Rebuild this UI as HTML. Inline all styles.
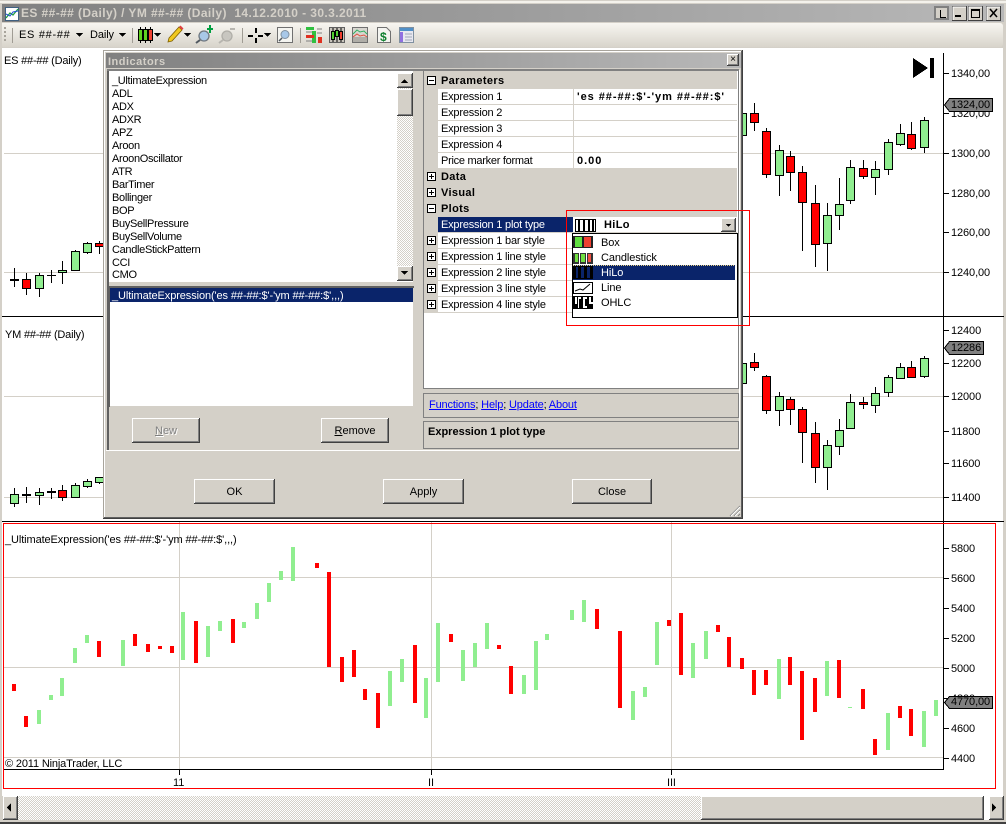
<!DOCTYPE html>
<html><head><meta charset="utf-8"><title>Indicators</title>
<style>
html,body{margin:0;padding:0}
body{width:1006px;height:824px;position:relative;overflow:hidden;background:#d4d0c8}
.a{position:absolute}
svg.a{left:0;top:0}
.t{position:absolute;white-space:pre;font:11px/13px "Liberation Sans",sans-serif;color:#000;margin-top:1px;letter-spacing:-.1px}
.l{letter-spacing:-.32px}
.e{letter-spacing:-.2px}
.b{font-weight:bold;letter-spacing:.35px}
.btn{position:absolute;background:#d4d0c8;box-shadow:inset -1px -1px #404040,inset 1px 1px #fff,inset -2px -2px #808080;font:11px/27px "Liberation Sans",sans-serif;text-align:center;color:#000}
.d{background:repeating-conic-gradient(#d4d0c8 0 25%,#fff 0 50%) 0 0/2px 2px}
.row{position:absolute;left:438px;width:299px;height:15px;background:#fff;border-bottom:1px solid #d4d0c8}
.w{color:#fff}
</style></head><body>
<div class="a" style="left:0;top:1px;width:1006px;height:2px;background:#f4f2ec"></div>
<div class="a" style="left:2px;top:4px;width:1002px;height:18px;background:linear-gradient(90deg,#808080,#b8b8b8)"></div>
<div class="t b" style="left:21px;top:5px;font-size:12px;line-height:14px;color:#d4d0c8;letter-spacing:.4px">ES ##-## (Daily) / YM ##-## (Daily)  14.12.2010 - 30.3.2011</div>
<div class="a" style="left:2px;top:23px;width:1001px;height:24px;background:linear-gradient(#f8f6f1,#d8d4cb);border-radius:0 3px 3px 0"></div>
<div class="t" style="left:19px;top:28px;font-size:11px;letter-spacing:.7px">ES ##-##</div>
<div class="t" style="left:90px;top:28px;font-size:11px">Daily</div>
<div class="a" style="left:2px;top:48px;width:1001px;height:748px;background:#fff"></div>
<div class="a d" style="left:18px;top:796px;width:683px;height:24px"></div>
<div class="a" style="left:984px;top:796px;width:5px;height:24px;background:#fff"></div>
<div class="a" style="left:0;top:822px;width:1006px;height:2px;background:#404040"></div>
<div class="btn" style="left:3px;top:796px;width:15px;height:24px"></div>
<div class="btn" style="left:701px;top:796px;width:283px;height:24px"></div>
<div class="btn" style="left:989px;top:796px;width:15px;height:24px"></div>

<svg class="a" width="1006" height="824" viewBox="0 0 1006 824" shape-rendering="crispEdges">
<path fill="none" stroke="#d4d0c8" d="M4 153.500H943M4 272.500H943M4 396.500H943M4 497.500H943M4 577.500H943M4 667.500H943M4 757.500H943M179.500 522V769M431.500 522V769M671.500 522V769"/>
<path fill="none" stroke="#000" d="M943.500 53V769M2 316.500H1004M2 521.500H1004M3 769.500H944M179.500 769V775M431.500 769V775M671.500 769V775M943 73.500h6M943 113.500h6M943 153.500h6M943 193.500h6M943 232.500h6M943 272.500h6M943 330.500h6M943 363.500h6M943 396.500h6M943 431.500h6M943 463.500h6M943 497.500h6M943 548.500h6M943 578.500h6M943 608.500h6M943 638.500h6M943 668.500h6M943 698.500h6M943 728.500h6M943 758.500h6"/>
<path fill="none" stroke="#f00" d="M3.500 523.500H995.500V788.500H3.500Z"/>
<path fill="#000" d="M913 58L928 68L913 78ZM930 58h4v20h-4z"/>
<path fill="none" stroke="#000" d="M754.500 103V131M766.500 128V178M779.500 145V196M790.500 151V191M802.500 166V251M815.500 185V267M827.500 203V271M839.500 178V230M850.500 160V204M863.500 160V179M875.500 161V195M888.500 139V175M900.500 124V146M911.500 122V150M924.500 117V153M754.500 353V371M766.500 375V414M779.500 392V426M790.500 397V425M802.500 407V463M815.500 422V483M827.500 440V490M839.500 419V455M850.500 394V429M863.500 397V409M875.500 387V413M888.500 375V397M900.500 363V378M911.500 361V377M924.500 356V378M14.500 268V287M26.500 273V295M39.500 273V297M51.500 270V283M62.500 261V284M75.500 250V271M87.500 242V254M99.500 241V254M14.500 488V507M26.500 487V503M39.500 488V505M51.500 488V499M62.500 485V501M75.500 483V497M87.500 479V488M99.500 477V484M47 275.500h9M10 279.500h9M10 280.500h9M22 494.500h9M22 495.500h9M47 491.500h9M47 492.500h9"/>
<path fill="#90ee90" stroke="#000" d="M738.500 113.500h8v22h-8zM775.500 150.500h8v25h-8zM823.500 215.500h8v28h-8zM835.500 204.500h8v11h-8zM846.500 167.500h8v33h-8zM871.500 169.500h8v8h-8zM884.500 142.500h8v27h-8zM896.500 133.500h8v11h-8zM920.500 120.500h8v27h-8zM738.500 363.500h8v20h-8zM775.500 396.500h8v14h-8zM823.500 445.500h8v22h-8zM835.500 430.500h8v16h-8zM846.500 402.500h8v26h-8zM871.500 393.500h8v12h-8zM884.500 377.500h8v15h-8zM896.500 367.500h8v11h-8zM920.500 358.500h8v18h-8zM35.500 275.500h8v13h-8zM58.500 270.500h8v2h-8zM71.500 251.500h8v19h-8zM83.500 243.500h8v9h-8zM10.500 494.500h8v9h-8zM35.500 492.500h8v3h-8zM71.500 485.500h8v12h-8zM83.500 481.500h8v5h-8zM95.500 477.500h8v5h-8z"/>
<path fill="#f00" stroke="#000" d="M750.500 113.500h8v9h-8zM762.500 131.500h8v43h-8zM786.500 156.500h8v16h-8zM798.500 172.500h8v30h-8zM811.500 203.500h8v41h-8zM859.500 168.500h8v8h-8zM907.500 134.500h8v14h-8zM750.500 362.500h8v5h-8zM762.500 376.500h8v34h-8zM786.500 399.500h8v10h-8zM798.500 409.500h8v23h-8zM811.500 433.500h8v34h-8zM859.500 402.500h8v2h-8zM907.500 367.500h8v10h-8zM22.500 279.500h8v9h-8zM95.500 243.500h8v3h-8zM58.500 490.500h8v7h-8z"/>
<path fill="#90ee90" d="M37 710h4v14h-4zM49 695h4v5h-4zM60 678h4v18h-4zM73 648h4v15h-4zM85 635h4v8h-4zM121 640h4v26h-4zM181 612h4v48h-4zM206 626h4v31h-4zM218 621h4v10h-4zM242 622h4v6h-4zM255 603h4v16h-4zM267 583h4v19h-4zM279 571h4v9h-4zM291 547h4v34h-4zM388 671h4v35h-4zM400 659h4v23h-4zM424 678h4v40h-4zM436 623h4v59h-4zM461 650h4v31h-4zM473 643h4v24h-4zM485 623h4v26h-4zM522 675h4v19h-4zM534 641h4v49h-4zM545 634h4v6h-4zM570 610h4v10h-4zM582 600h4v22h-4zM631 691h4v29h-4zM643 687h4v10h-4zM655 622h4v43h-4zM691 643h4v35h-4zM704 631h4v28h-4zM777 659h4v40h-4zM825 661h4v35h-4zM848 707h4v1h-4zM886 713h4v37h-4zM922 711h4v36h-4zM934 700h4v16h-4z"/>
<path fill="#f00" d="M12 684h4v7h-4zM24 716h4v11h-4zM97 641h4v16h-4zM133 634h4v12h-4zM146 644h4v8h-4zM158 646h4v3h-4zM170 646h4v7h-4zM194 621h4v42h-4zM231 619h4v24h-4zM315 563h4v5h-4zM327 572h4v95h-4zM340 657h4v25h-4zM352 650h4v27h-4zM363 689h4v11h-4zM376 693h4v35h-4zM413 645h4v58h-4zM449 634h4v8h-4zM497 645h4v4h-4zM509 666h4v28h-4zM595 609h4v20h-4zM618 631h4v77h-4zM667 620h4v6h-4zM679 613h4v62h-4zM716 625h4v7h-4zM727 637h4v30h-4zM740 658h4v11h-4zM752 670h4v25h-4zM764 670h4v15h-4zM788 657h4v28h-4zM800 671h4v69h-4zM813 678h4v34h-4zM837 660h4v38h-4zM861 689h4v20h-4zM873 739h4v16h-4zM898 706h4v12h-4zM909 709h4v27h-4z"/>
</svg>

<div class="t" style="left:4px;top:54px;letter-spacing:-.2px">ES ##-## (Daily)</div>
<div class="t" style="left:5px;top:328px;letter-spacing:-.2px">YM ##-## (Daily)</div>
<div class="t" style="left:5px;top:533px">_UltimateExpression('es ##-##:$'-'ym ##-##:$',,,)</div>
<div class="t" style="left:5px;top:757px;letter-spacing:-.15px">© 2011 NinjaTrader, LLC</div>
<div class="t" style="left:173px;top:776px">11</div>
<div class="t" style="left:428px;top:776px">II</div>
<div class="t" style="left:667px;top:776px">III</div>
<div class="t" style="left:951px;top:67px">1340,00</div>
<div class="t" style="left:951px;top:107px">1320,00</div>
<div class="t" style="left:951px;top:147px">1300,00</div>
<div class="t" style="left:951px;top:187px">1280,00</div>
<div class="t" style="left:951px;top:226px">1260,00</div>
<div class="t" style="left:951px;top:266px">1240,00</div>
<div class="t" style="left:951px;top:324px">12400</div>
<div class="t" style="left:951px;top:357px">12200</div>
<div class="t" style="left:951px;top:390px">12000</div>
<div class="t" style="left:951px;top:425px">11800</div>
<div class="t" style="left:951px;top:457px">11600</div>
<div class="t" style="left:951px;top:491px">11400</div>
<div class="t" style="left:951px;top:542px">5800</div>
<div class="t" style="left:951px;top:572px">5600</div>
<div class="t" style="left:951px;top:602px">5400</div>
<div class="t" style="left:951px;top:632px">5200</div>
<div class="t" style="left:951px;top:662px">5000</div>
<div class="t" style="left:951px;top:692px">4800</div>
<div class="t" style="left:951px;top:722px">4600</div>
<div class="t" style="left:951px;top:752px">4400</div>
<svg class="a" width="1006" height="824" viewBox="0 0 1006 824" shape-rendering="crispEdges">
<path fill="#808080" stroke="#000" d="M944.500 105L949.500 98.500H992.500V111.500H949.500ZM944.500 348L949.500 341.500H983.500V354.500H949.500ZM944.500 702.500L949.500 696.500H992.500V708.500H949.500Z"/>
</svg>
<div class="t" style="left:951px;top:98px">1324,00</div>
<div class="t" style="left:951px;top:341px">12286</div>
<div class="t" style="left:951px;top:695px">4770,00</div>

<!-- Dialog -->
<div class="a" style="left:103px;top:50px;width:640px;height:469px;background:#d4d0c8;box-shadow:inset -1px -1px #404040,inset 1px 1px #a8a49c,inset -2px -2px #606060,inset 2px 2px #fff"></div>
<div class="a" style="left:106px;top:53px;width:635px;height:15px;background:linear-gradient(90deg,#808080,#b8b8b8)"></div>
<div class="t b" style="left:108px;top:55px;color:#d4d0c8;letter-spacing:.5px">Indicators</div>
<div class="btn" style="left:727px;top:54px;width:12px;height:12px;font-size:10px;line-height:12px">×</div>
<div class="a" style="left:106px;top:450px;width:634px;height:1px;background:#fff"></div>
<div class="a" style="left:107px;top:70px;width:2px;height:380px;background:#606060"></div>
<div class="a" style="left:107px;top:69px;width:632px;height:2px;background:#808080"></div>
<div class="a" style="left:739px;top:70px;width:1px;height:381px;background:#fff"></div>

<div class="a" style="left:109px;top:71px;width:304px;height:211px;background:#fff;border-bottom:1px solid #d4d0c8"></div>
<div class="a d" style="left:397px;top:88px;width:16px;height:178px"></div>
<div class="btn" style="left:397px;top:73px;width:16px;height:15px"></div>
<div class="btn" style="left:397px;top:89px;width:16px;height:27px"></div>
<div class="btn" style="left:397px;top:266px;width:16px;height:15px"></div>
<div class="t l" style="left:112px;top:74px">_UltimateExpression</div>
<div class="t l" style="left:112px;top:87px">ADL</div>
<div class="t l" style="left:112px;top:100px">ADX</div>
<div class="t l" style="left:112px;top:113px">ADXR</div>
<div class="t l" style="left:112px;top:126px">APZ</div>
<div class="t l" style="left:112px;top:139px">Aroon</div>
<div class="t l" style="left:112px;top:152px">AroonOscillator</div>
<div class="t l" style="left:112px;top:165px">ATR</div>
<div class="t l" style="left:112px;top:178px">BarTimer</div>
<div class="t l" style="left:112px;top:191px">Bollinger</div>
<div class="t l" style="left:112px;top:204px">BOP</div>
<div class="t l" style="left:112px;top:217px">BuySellPressure</div>
<div class="t l" style="left:112px;top:230px">BuySellVolume</div>
<div class="t l" style="left:112px;top:243px">CandleStickPattern</div>
<div class="t l" style="left:112px;top:256px">CCI</div>
<div class="t l" style="left:112px;top:268px">CMO</div>

<div class="a" style="left:108px;top:286px;width:306px;height:121px;background:#fff;box-shadow:inset 2px 2px #606060,inset -1px -1px #d4d0c8"></div>
<div class="a" style="left:110px;top:288px;width:303px;height:14px;background:#0a246a"></div>
<div class="t w" style="left:112px;top:289px">_UltimateExpression('es ##-##:$'-'ym ##-##:$',,,)</div>
<div class="btn" style="left:132px;top:418px;width:68px;height:25px;color:#808080;text-shadow:1px 1px #fff"><u>N</u>ew</div>
<div class="btn" style="left:321px;top:418px;width:68px;height:25px"><u>R</u>emove</div>
<div class="btn" style="left:194px;top:479px;width:81px;height:25px">OK</div>
<div class="btn" style="left:383px;top:479px;width:81px;height:25px">Apply</div>
<div class="btn" style="left:572px;top:479px;width:80px;height:25px">Close</div>

<!-- Property grid -->
<div class="a" style="left:423px;top:71px;width:314px;height:317px;background:#fff;border:1px solid #808080;border-top:0"></div>
<div class="a" style="left:424px;top:71px;width:14px;height:242px;background:#d4d0c8"></div>
<div class="a" style="left:424px;top:71px;width:313px;height:18px;background:#d4d0c8"></div>
<div class="a" style="left:424px;top:169px;width:313px;height:48px;background:#d4d0c8"></div>
<div class="row" style="top:89px"></div><div class="row" style="top:105px"></div><div class="row" style="top:121px"></div><div class="row" style="top:137px"></div><div class="row" style="top:153px"></div>
<div class="row" style="top:217px"></div><div class="row" style="top:233px"></div><div class="row" style="top:249px"></div><div class="row" style="top:265px"></div><div class="row" style="top:281px"></div><div class="row" style="top:297px"></div>
<div class="a" style="left:573px;top:89px;width:1px;height:80px;background:#d4d0c8"></div>
<div class="a" style="left:573px;top:233px;width:1px;height:80px;background:#d4d0c8"></div>
<div class="a" style="left:438px;top:217px;width:135px;height:15px;background:#0a246a"></div>
<div class="t b" style="left:441px;top:74px">Parameters</div>
<div class="t e" style="left:441px;top:90px">Expression 1</div>
<div class="t e" style="left:441px;top:106px">Expression 2</div>
<div class="t e" style="left:441px;top:122px">Expression 3</div>
<div class="t e" style="left:441px;top:138px">Expression 4</div>
<div class="t" style="left:441px;top:154px;letter-spacing:-.27px">Price marker format</div>
<div class="t b" style="left:577px;top:90px;letter-spacing:.95px">'es ##-##:$'-'ym ##-##:$'</div>
<div class="t b" style="left:577px;top:154px;letter-spacing:1px">0.00</div>
<div class="t b" style="left:441px;top:170px">Data</div>
<div class="t b" style="left:441px;top:186px">Visual</div>
<div class="t b" style="left:441px;top:202px">Plots</div>
<div class="t w e" style="left:441px;top:218px">Expression 1 plot type</div>
<div class="t e" style="left:441px;top:234px">Expression 1 bar style</div>
<div class="t e" style="left:441px;top:250px">Expression 1 line style</div>
<div class="t e" style="left:441px;top:266px">Expression 2 line style</div>
<div class="t e" style="left:441px;top:282px">Expression 3 line style</div>
<div class="t e" style="left:441px;top:298px">Expression 4 line style</div>
<div class="t b" style="left:604px;top:218px">HiLo</div>
<div class="btn" style="left:721px;top:218px;width:15px;height:14px"></div>
<div class="a" style="left:572px;top:233px;width:164px;height:83px;background:#fff;border:1px solid #000"></div>
<div class="a" style="left:573px;top:265px;width:162px;height:15px;background:#0a246a"></div>
<div class="t" style="left:601px;top:236px">Box</div>
<div class="t" style="left:601px;top:251px;letter-spacing:-.1px">Candlestick</div>
<div class="t w" style="left:601px;top:266px">HiLo</div>
<div class="t" style="left:601px;top:281px">Line</div>
<div class="t" style="left:601px;top:296px">OHLC</div>

<div class="a" style="left:423px;top:393px;width:314px;height:23px;border:1px solid #808080"></div>
<div class="a" style="left:423px;top:421px;width:314px;height:26px;border:1px solid #808080"></div>
<div class="t" style="left:429px;top:398px;color:#00f;letter-spacing:-.15px"><u>Functions</u><span style="color:#000">;</span> <u>Help</u><span style="color:#000">;</span> <u>Update</u><span style="color:#000">;</span> <u>About</u></div>
<div class="t b" style="left:428px;top:425px;letter-spacing:0">Expression 1 plot type</div>

<!-- Overlay icons -->
<svg class="a" width="1006" height="824" viewBox="0 0 1006 824">
<g shape-rendering="crispEdges">
<path fill="none" stroke="#f00" d="M566.500 210.500H749.500V325.500H566.500Z"/>
<!-- expanders -->
<g fill="#fff" stroke="#000">
<path d="M427.500 76.500h8v8h-8zM427.500 172.500h8v8h-8zM427.500 188.500h8v8h-8zM427.500 204.500h8v8h-8zM427.500 236.500h8v8h-8zM427.500 252.500h8v8h-8zM427.500 268.500h8v8h-8zM427.500 284.500h8v8h-8zM427.500 300.500h8v8h-8z"/>
<path fill="none" d="M429 80.500h5M429 176.500h5M431.500 174v5M429 192.500h5M431.500 190v5M429 208.500h5M429 240.500h5M431.500 238v5M429 256.500h5M431.500 254v5M429 272.500h5M431.500 270v5M429 288.500h5M431.500 286v5M429 304.500h5M431.500 302v5"/>
</g>
<!-- scrollbar arrows -->
<path fill="#000" d="M401 83h7l-3.500-4zM401 271h7l-3.500 4zM726 224h5l-2.500 3zM11 803v9l-4-4.500zM992 803v9l4-4.500z"/>
<!-- plot type swatch -->
<path fill="#fff" stroke="#000" d="M575.500 219.500h20v12h-20z"/>
<path fill="#000" d="M578 220h2v11h-2zM583 220h2v11h-2zM588 220h2v11h-2zM592 220h2v11h-2z"/>
<!-- Box -->
<path fill="#222" d="M573 236h20v12h-20z"/>
<path fill="#60e040" d="M575 237h7v10h-7z"/><path fill="#f04030" d="M584 237h7v10h-7z"/>
<!-- Candlestick -->
<path fill="#333" d="M573 251h20v13h-20z"/>
<path fill="#fff" d="M573 251h20v2h-20zM579 253h1v11h-1zM586 253h1v11h-1z"/>
<path fill="#70e040" d="M575 254h3v8h-3zM581 254h4v8h-4z"/><path fill="#f05040" d="M588 254h3v8h-3z"/>
<!-- HiLo -->
<path fill="#000" d="M573 266h20v13h-20z"/>
<path fill="#0a246a" d="M576 267h2v11h-2zM581 267h3v11h-3zM587 267h3v11h-3z"/>
<path fill="none" stroke="#e8d080" stroke-dasharray="1 1" d="M573 265.500h162"/>
<!-- Line -->
<path fill="#fff" stroke="#000" d="M573.500 282.500h19v11h-19z"/>
<!-- OHLC -->
<path fill="#000" d="M573 296h20v13h-20z"/>
<path fill="#fff" d="M575 297h2v7h-2zM578 297h3v2h-2v9h-1zM583 297h4v2h-2v7h2v2h-4zM589 297h2v5h2v2h-4z"/>
<!-- Toolbar separators -->
<path fill="#a8a49c" d="M4 27h2v2h-2zM4 31h2v2h-2zM4 35h2v2h-2zM4 39h2v2h-2z"/>
<path fill="none" stroke="#a09c94" d="M12.500 28V43M132.500 28V43M242.500 28V43M300.500 28V43"/>
<path fill="#000" d="M76 33h7l-3.500 4zM119 33h7l-3.500 4zM154 33h7l-3.500 4zM184 33h7l-3.500 4zM264 33h7l-3.500 4z"/>
<!-- crosshair -->
<path fill="#000" d="M255 28h2v5h-2zM255 38h2v5h-2zM248 35h5v2h-5zM258 35h5v2h-5z"/>
<!-- candles -->
<path fill="none" stroke="#000" d="M140.500 27V43M145.500 27V43M150.500 27V43"/>
<path fill="#60d020" stroke="#000" d="M138.500 29.500h4v11h-4zM143.500 29.500h4v11h-4z"/>
<path fill="#f04030" stroke="#000" d="M148.500 29.500h4v11h-4z"/>
<!-- window buttons -->
<path fill="#808080" d="M934 6h15v14h-15z"/><path fill="#d4d0c8" d="M936 8h11v10h-11z"/>
<path fill="#000" d="M940 10h1v7h5v1h-6z"/>
</g>
<!-- title icon -->
<g>
<path fill="#fff" stroke="#406080" d="M5.500 7.500h13v13h-13z"/>
<path fill="none" stroke="#20a040" stroke-width="1.300" d="M6 18l4-5 3 2 5-6"/>
<path fill="none" stroke="#2050d0" stroke-width="1" d="M6 14l4 2 3-4 5-1"/>
<!-- Line swatch -->
<path fill="none" stroke="#000" d="M575 291l5-2 3 1 7-6"/>
<!-- pencil -->
<path fill="#f0c820" stroke="#806000" stroke-width=".8" d="M169 38l10-11 3 3-10 11-4 1z"/>
<path fill="#e04040" d="M179 27l1.500-1.500 3 3-1.500 1.500z"/>
<!-- zoom plus -->
<circle cx="204" cy="36" r="5" fill="#a8c8e8" stroke="#707880" stroke-width="1.300"/>
<path stroke="#505860" stroke-width="2" d="M200 40l-4 3"/>
<path fill="#00a040" d="M207 28h2v-3h2v3h2v2h-2v3h-2v-3h-2z"/>
<!-- zoom minus grey -->
<circle cx="227" cy="36" r="5" fill="#c8c6c0" stroke="#b0aea8" stroke-width="1.300"/>
<path stroke="#b8b6b0" stroke-width="2" d="M223 40l-4 3M230 29h5"/>
<!-- search box -->
<path fill="#f4f4f0" stroke="#707070" d="M277.500 27.500h15v15h-15z"/>
<circle cx="285" cy="34.500" r="4" fill="#a8c8e8" stroke="#8090a0"/>
<path stroke="#505860" stroke-width="1.500" d="M282 38l-3 3"/>
<!-- bars icon -->
<path fill="#30c040" d="M306 27h8v3h-8zM312 31h4v12h-4z"/>
<path fill="#e03020" d="M306 35h8v3h-8zM318 37h4v6h-4z"/>
<path stroke="#808080" d="M306 32h6M306 41h6M317 29h5M317 33h5"/>
<!-- chart candles icon -->
<path fill="#c8c4bc" stroke="#606060" d="M329.500 27.500h15v15h-15z"/>
<path stroke="#000" d="M333 28v14M337 28v14M341 28v14"/>
<path fill="#50d030" stroke="#000" d="M331.500 31.500h3v8h-3zM335.500 30.500h3v6h-3z"/>
<path fill="#f04030" stroke="#000" d="M339.500 31.500h3v8h-3z"/>
<!-- chart line icon -->
<path fill="#d8d6d0" stroke="#707070" d="M352.500 27.500h15v15h-15z"/>
<path fill="#b0aea8" d="M353 37h14v5h-14z"/>
<path fill="none" stroke="#30b060" d="M353 34l4-4 3 2 4-1 3 3"/>
<path fill="none" stroke="#e05040" d="M353 37l4-3 3 2 4-1 3 2"/>
<!-- dollar doc -->
<path fill="#f4f4f0" stroke="#707070" d="M377.500 27.500h9l4 4v11h-13z"/>
<text x="380" y="41" font-family="Liberation Sans,sans-serif" font-size="12" font-weight="bold" fill="#108030">$</text>
<!-- table icon -->
<path fill="#e8e8f0" stroke="#8090a0" d="M399.500 27.500h14v15h-14z"/>
<path fill="#5090c8" d="M400 28h13v3h-13z"/>
<path fill="#9070e0" d="M400 32h3v10h-3z"/>
<path stroke="#a0a8b8" d="M405 34h7M405 37h7M405 40h7"/>
<!-- window buttons -->
<path fill="#d4d0c8" stroke="#404040" d="M952.500 6.500h14v14h-14zM968.500 6.500h14v14h-14zM986.500 6.500h14v14h-14z"/>
<path stroke="#fff" fill="none" d="M953 20V7h13M969 20V7h13M987 20V7h13"/>
<path fill="#000" d="M955 15h6v2h-6z"/>
<path fill="none" stroke="#000" d="M971.500 9.500h8v8h-8z"/><path stroke="#000" d="M971 10.500h9"/>
<path stroke="#000" stroke-width="1.500" d="M990 9l7 8M997 9l-7 8"/>
<!-- grip -->
<path stroke="#808080" d="M730 516l10-10M734 516l6-6M738 516l2-2"/>
<path stroke="#fff" d="M731 516l9-9M735 516l5-5"/>
</g>
</svg>
</body></html>
